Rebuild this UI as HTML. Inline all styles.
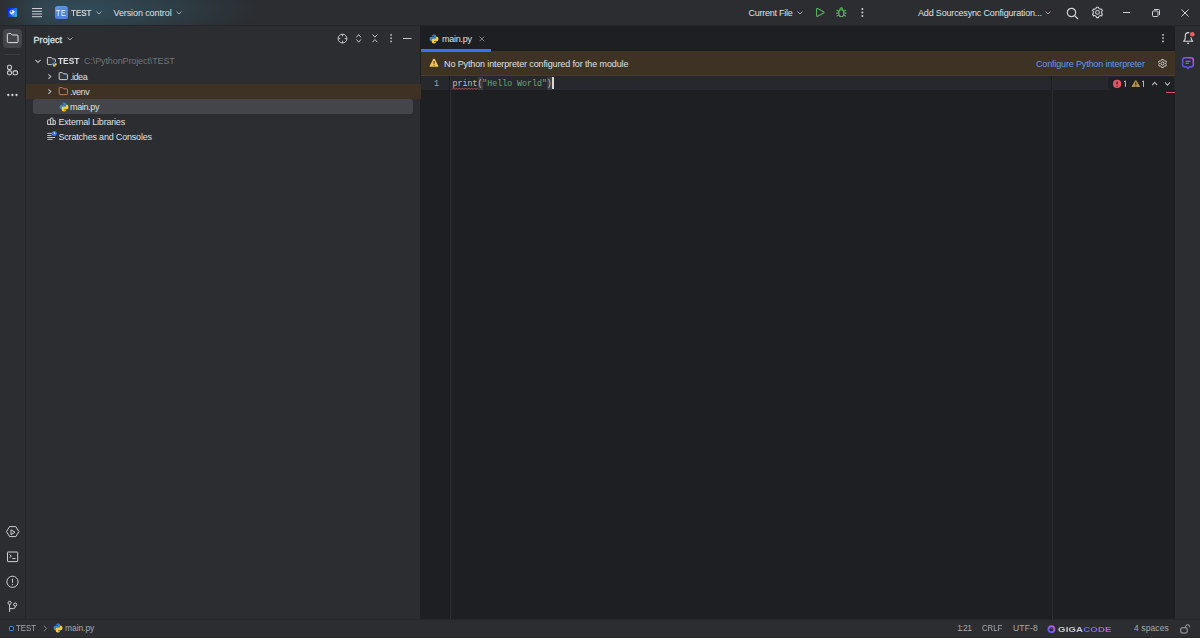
<!DOCTYPE html>
<html><head><meta charset="utf-8">
<style>
*{margin:0;padding:0;box-sizing:border-box}
html,body{width:1200px;height:638px;overflow:hidden;background:#2B2D30;font-family:"Liberation Sans",sans-serif;color:#DFE1E5}
.a{position:absolute}
.t{position:absolute;white-space:pre;font-size:9px;line-height:11px}
svg{position:absolute;overflow:visible}
#title{left:0;top:0;width:1200px;height:25px;background:#2B2D30}
#grad{left:0;top:0;width:1200px;height:25px;background:linear-gradient(90deg,rgba(43,45,48,0.9),rgba(43,45,48,0) 40px),radial-gradient(ellipse 185px 38px at 78px 9px,rgba(52,94,112,0.64) 0%,rgba(52,94,112,0.38) 45%,rgba(52,96,114,0.12) 80%,rgba(52,96,114,0) 100%)}
#lstrip{left:0;top:25px;width:25px;height:594px;background:#2B2D30}
#lborder{left:25px;top:25px;width:1px;height:594px;background:#242528}
#proj{left:26px;top:25px;width:394px;height:594px;background:#2B2D30}
#pborder{left:420px;top:25px;width:1px;height:594px;background:#1E1F22}
#editor{left:421px;top:25px;width:754px;height:594px;background:#1E1F22}
#rborder{display:none}
#rstrip{left:1175px;top:25px;width:25px;height:594px;background:#2B2D30}
#tborder{left:0;top:25px;width:1200px;height:1px;background:#242629}
#status{left:0;top:619px;width:1200px;height:19px;background:#2B2D30;border-top:1px solid #25272A;border-bottom:1px solid #292B2B}
</style></head><body>
<div id="title" class="a"></div>
<div id="grad" class="a"></div>
<div id="lstrip" class="a"></div>
<div id="lborder" class="a"></div>
<div id="proj" class="a"></div>
<div id="pborder" class="a"></div>
<div id="editor" class="a"></div>
<div id="rborder" class="a"></div>
<div id="rstrip" class="a"></div>
<div id="status" class="a"></div>
<div id="tborder" class="a"></div>

<!-- ===== TITLE BAR ===== -->
<svg style="left:0;top:0" width="25" height="25" viewBox="0 0 25 25"><defs><linearGradient id="ag" x1="0" y1="0.3" x2="1" y2="0.7"><stop offset="0" stop-color="#0a2ae8"/><stop offset="0.55" stop-color="#1f5cf5"/><stop offset="1" stop-color="#2bc4f8"/></linearGradient></defs><rect x="8" y="8" width="8.8" height="8.8" fill="url(#ag)"/><path d="M9.3 11.9Q9.8 14 12 14Q14.4 13.8 14.8 11.6Q14.2 10 12.2 9.9Q10.2 9.9 9.3 11.9Z" fill="#fff"/><circle cx="11.4" cy="11.6" r="1" fill="#1a44f0"/><path d="M11.2 14.3Q12.6 15.2 13.8 14.2" stroke="#cfe6ff" stroke-width="0.7" fill="none"/></svg>
<svg style="left:32px;top:7px" width="11" height="11" viewBox="0 0 11 11"><g stroke="#CED0D6" stroke-width="1"><path d="M0 1.5H10M0 4.3H10M0 7H10M0 9.7H10"/></g></svg>
<div class="a" style="left:55px;top:6px;width:12.5px;height:13px;border-radius:2.5px;background:linear-gradient(160deg,#5a9ae6,#4c84de 60%,#5b7ee8)"></div>
<div class="t" style="left:56.2px;top:7.8px;font-size:9px;color:#F4F7FF;letter-spacing:0.6px;transform:scaleX(0.8);transform-origin:0 0">TE</div>
<div class="t" style="left:71.2px;top:8px;transform:scaleX(0.89);transform-origin:0 0;-webkit-text-stroke:0.15px #DFE1E5">TEST</div>
<svg style="left:96px;top:11px" width="6" height="4" viewBox="0 0 6 4"><path d="M0.5 0.5L3 3L5.5 0.5" stroke="#B0B3B8" fill="none" stroke-width="0.9"/></svg>
<div class="t" style="left:113.5px;top:8px;letter-spacing:-0.1px">Version control</div>
<svg style="left:176px;top:11px" width="6" height="4" viewBox="0 0 6 4"><path d="M0.5 0.5L3 3L5.5 0.5" stroke="#B0B3B8" fill="none" stroke-width="0.9"/></svg>

<div class="t" style="left:748.5px;top:8px;letter-spacing:-0.25px">Current File</div>
<svg style="left:797px;top:11px" width="6" height="4" viewBox="0 0 6 4"><path d="M0.5 0.5L3 3L5.5 0.5" stroke="#B0B3B8" fill="none" stroke-width="0.9"/></svg>
<svg style="left:805px;top:0" width="50" height="25" viewBox="805 0 50 25"><g stroke="#5AAE5F" stroke-width="1.1" fill="none" stroke-linejoin="round" stroke-linecap="round">
<path d="M816.6 9.2Q816.6 8.1 817.6 8.6L823.6 11.8Q824.4 12.4 823.6 12.9L817.6 16.2Q816.6 16.7 816.6 15.6Z"/>
<path d="M839.9 9.6Q839.9 7.9 841.3 7.9Q842.7 7.9 842.7 9.6"/>
<rect x="838.9" y="9.7" width="4.8" height="6.8" rx="2.3"/>
<path d="M836.9 10.3L838.7 11.3M836.5 13.1H838.8M836.9 16L838.8 15M845.7 10.3L843.9 11.3M846.1 13.1H843.8M845.7 16L843.8 15"/>
</g></svg>
<svg style="left:855px;top:0" width="15" height="25" viewBox="855 0 15 25"><g fill="#CED0D6"><circle cx="862.4" cy="9" r="1"/><circle cx="862.4" cy="12.5" r="1"/><circle cx="862.4" cy="16" r="1"/></g></svg>

<div class="t" style="left:918px;top:8px;letter-spacing:-0.17px">Add Sourcesync Configuration...</div>
<svg style="left:1045px;top:11px" width="6" height="4" viewBox="0 0 6 4"><path d="M0.5 0.5L3 3L5.5 0.5" stroke="#B0B3B8" fill="none" stroke-width="0.9"/></svg>
<svg style="left:1066px;top:7px" width="13" height="13" viewBox="0 0 13 13"><g stroke="#CED0D6" stroke-width="1.2" fill="none"><circle cx="5.5" cy="5.5" r="4.2"/><path d="M8.6 8.6L12 12"/></g></svg>
<svg style="left:1085px;top:0" width="25" height="25" viewBox="1085 0 25 25"><g stroke="#CED0D6" stroke-width="1.05" fill="none" stroke-linejoin="round"><path d="M1096.49 7.20 L1098.51 7.20 L1098.80 8.41 L1100.31 9.28 L1101.50 8.92 L1102.51 10.67 L1101.61 11.53 L1101.61 13.27 L1102.51 14.13 L1101.50 15.88 L1100.31 15.52 L1098.80 16.39 L1098.51 17.60 L1096.49 17.60 L1096.20 16.39 L1094.69 15.52 L1093.50 15.88 L1092.49 14.13 L1093.39 13.27 L1093.39 11.53 L1092.49 10.67 L1093.50 8.92 L1094.69 9.28 L1096.20 8.41Z"/><circle cx="1097.5" cy="12.4" r="1.9"/></g></svg>
<div class="a" style="left:1123px;top:12px;width:7px;height:1px;background:#CED0D6"></div>
<svg style="left:1152px;top:9px" width="8" height="8" viewBox="0 0 8 8"><g stroke="#CED0D6" stroke-width="1" fill="none"><rect x="0.5" y="2" width="5.5" height="5.5" rx="0.8"/><path d="M2 0.5H6.5Q7.5 0.5 7.5 1.5V6"/></g></svg>
<svg style="left:1181px;top:9px" width="8" height="8" viewBox="0 0 8 8"><path d="M0.5 0.5L7.5 7.5M7.5 0.5L0.5 7.5" stroke="#CED0D6" stroke-width="1"/></svg>


<!-- ===== LEFT STRIP ===== -->
<div class="a" style="left:3px;top:29px;width:19px;height:19px;border-radius:4px;background:#43454A"></div>
<svg style="left:0;top:26px" width="25" height="25" viewBox="0 26 25 25"><path d="M7.3 34.6Q7.3 33.6 8.3 33.6H10.9L12.3 35H17Q18 35 18 36V41.6Q18 42.6 17 42.6H8.3Q7.3 42.6 7.3 41.6Z" stroke="#DFE1E5" stroke-width="1" fill="none" stroke-linejoin="round"/></svg>
<div class="a" style="left:5px;top:54px;width:15px;height:1px;background:#393B40"></div>
<svg style="left:0;top:60px" width="25" height="20" viewBox="0 60 25 20"><g stroke="#CED0D6" stroke-width="1.1" fill="none"><rect x="7.6" y="65.3" width="3.8" height="4.1" rx="1.2"/><rect x="7.6" y="70.9" width="3.8" height="3.9" rx="1.2"/><rect x="13.1" y="70.9" width="4.3" height="3.9" rx="1.2"/></g></svg>
<svg style="left:0;top:92px" width="25" height="6" viewBox="0 92 25 6"><g fill="#CED0D6"><circle cx="8.3" cy="95" r="1.15"/><circle cx="12.4" cy="95" r="1.15"/><circle cx="16.5" cy="95" r="1.15"/></g></svg>

<svg style="left:0;top:520px" width="25" height="99" viewBox="0 520 25 99"><g stroke="#CED0D6" stroke-width="1" fill="none" stroke-linejoin="round">
<path d="M6.5 531.6L9.6 526.6H15.8L18.9 531.6L15.8 536.6H9.6Z"/>
<path d="M11 529.8L15 532.2L11 534.6Z"/>
<rect x="7.5" y="552" width="10.2" height="9.6" rx="0.5"/>
<path d="M9.5 554.5L11.4 556.1L9.5 557.7M12.3 558.6H15.6"/>
<circle cx="12.5" cy="581.8" r="5.6"/>
<path d="M12.5 578.8V582.8"/>
<circle cx="9.6" cy="602.9" r="1.6"/>
<circle cx="15.2" cy="604.6" r="1.6"/>
<path d="M9.6 604.5V611.8M15.2 606.2V606.8Q15.2 608.6 13.4 608.6H9.6"/>
</g><circle cx="12.5" cy="584.6" r="0.7" fill="#CED0D6"/></svg>

<!-- ===== PROJECT PANEL ===== -->
<div class="t" style="left:33.5px;top:34.7px;letter-spacing:0.1px;-webkit-text-stroke:0.3px #DFE1E5">Project</div>
<svg style="left:67px;top:37px" width="6" height="4" viewBox="0 0 6 4"><path d="M0.5 0.5L3 3L5.5 0.5" stroke="#B0B3B8" fill="none" stroke-width="0.9"/></svg>
<svg style="left:330px;top:28px" width="90" height="20" viewBox="330 28 90 20"><g stroke="#C3C5CA" stroke-width="1" fill="none">
<circle cx="342.5" cy="38.6" r="4.4"/><path d="M342.5 34.2V36.4M342.5 40.8V43M338.1 38.6H340.3M344.7 38.6H346.9"/>
<path d="M356.4 37.4L358.7 34.6L361 37.4M356.4 39.4L358.7 42.2L361 39.4"/>
<path d="M372.5 34.5L374.9 37.2L377.3 34.5M372.5 42.2L374.9 39.5L377.3 42.2"/>
<path d="M403 38.5H411.6"/>
</g><g fill="#C3C5CA"><circle cx="391.1" cy="34.9" r="0.85"/><circle cx="391.1" cy="38.15" r="0.85"/><circle cx="391.1" cy="41.4" r="0.85"/></g></svg>

<!-- tree rows -->
<div class="a" style="left:26px;top:84px;width:394.6px;height:15px;background:#3D3223"></div>
<div class="a" style="left:33px;top:99px;width:380px;height:15px;border-radius:3px;background:#43454A"></div>

<svg style="left:30px;top:52px" width="30" height="17" viewBox="30 52 30 17"><path d="M35.4 59.8L38 62.4L40.6 59.8" stroke="#B7BAC0" fill="none" stroke-width="1.05"/><path d="M51.8 64.6H48.2Q47.4 64.6 47.4 63.8V58.3Q47.4 57.5 48.2 57.5H51.2L52.6 58.9H54.6Q55.4 58.9 55.4 59.7V61.8" stroke="#CED0D6" stroke-width="1" fill="#35373B" stroke-linejoin="round"/><g transform="translate(51.6,61.6) scale(0.54)"><path d="M2.7 2.3Q2.7 0.5 4.7 0.5H5.3Q7.3 0.5 7.3 2.3V4.3Q7.3 5.3 6.3 5.3H3.9Q2.9 5.3 2.9 6.3V7.3H2Q0.5 7.3 0.5 5.1V4.7Q0.5 2.7 2.4 2.7H5V2.3Z" fill="#3F7FC0"/><circle cx="3.9" cy="1.7" r="0.45" fill="#20364f"/><path d="M7.3 7.7Q7.3 9.5 5.3 9.5H4.7Q2.7 9.5 2.7 7.7V5.7Q2.7 4.7 3.7 4.7H6.1Q7.1 4.7 7.1 3.7V2.7H8Q9.5 2.7 9.5 4.9V5.3Q9.5 7.3 7.6 7.3H5V7.7Z" fill="#F5CC3A"/><circle cx="6.1" cy="8.3" r="0.45" fill="#5a4a10"/></g></svg>
<div class="t" style="left:58.3px;top:56px;font-weight:bold;transform:scaleX(0.925);transform-origin:0 0">TEST</div>
<div class="t" style="left:84px;top:56px;color:#6F737A;letter-spacing:-0.11px">C:\PythonProject\TEST</div>

<svg style="left:44px;top:68px" width="28" height="32" viewBox="44 68 28 32"><path d="M48.3 74.3L50.9 76.6L48.3 78.9" stroke="#B7BAC0" fill="none" stroke-width="1.05"/><path d="M59.2 73.3Q59.2 72.6 59.9 72.6H62.3L63.6 73.9H66.7Q67.4 73.9 67.4 74.6V78.9Q67.4 79.6 66.7 79.6H59.9Q59.2 79.6 59.2 78.9Z" stroke="#CED0D6" stroke-width="1" fill="#35373B" stroke-linejoin="round"/>
<path d="M48.3 89.3L50.9 91.6L48.3 93.9" stroke="#B7BAC0" fill="none" stroke-width="1.05"/><path d="M59.2 88.3Q59.2 87.6 59.9 87.6H62.3L63.6 88.9H66.7Q67.4 88.9 67.4 89.6V93.9Q67.4 94.6 66.7 94.6H59.9Q59.2 94.6 59.2 93.9Z" stroke="#C47F58" stroke-width="1" fill="#3B2A20" stroke-linejoin="round"/></svg>
<div class="t" style="left:70px;top:71.5px;letter-spacing:-0.47px">.idea</div>

<div class="t" style="left:70px;top:86.5px;letter-spacing:-0.47px">.venv</div>

<svg class="py" style="left:58.5px;top:101.5px" width="10" height="10" viewBox="0 0 10 10"><path d="M2.7 2.3Q2.7 0.5 4.7 0.5H5.3Q7.3 0.5 7.3 2.3V4.3Q7.3 5.3 6.3 5.3H3.9Q2.9 5.3 2.9 6.3V7.3H2Q0.5 7.3 0.5 5.1V4.7Q0.5 2.7 2.4 2.7H5V2.3Z" fill="#3F7FC0"/><circle cx="3.9" cy="1.7" r="0.45" fill="#20364f"/><path d="M7.3 7.7Q7.3 9.5 5.3 9.5H4.7Q2.7 9.5 2.7 7.7V5.7Q2.7 4.7 3.7 4.7H6.1Q7.1 4.7 7.1 3.7V2.7H8Q9.5 2.7 9.5 4.9V5.3Q9.5 7.3 7.6 7.3H5V7.7Z" fill="#F5CC3A"/><circle cx="6.1" cy="8.3" r="0.45" fill="#5a4a10"/></svg>
<div class="t" style="left:70px;top:101.7px;letter-spacing:-0.35px">main.py</div>

<svg style="left:40px;top:112px" width="20" height="32" viewBox="40 112 20 32"><g stroke="#CED0D6" stroke-width="1" fill="none" stroke-linejoin="round"><path d="M47.6 124.4V120.3Q47.6 119.9 48 119.9H50.6V118.5Q50.6 118.1 51 118.1H52.6Q53 118.1 53 118.5V120.6H54.9Q55.3 120.6 55.3 121V124.4Z"/><path d="M50.6 120V124.4M53 120.6V124.4"/></g><g stroke="#CED0D6" stroke-width="0.9"><path d="M47.3 133.4H52M47.3 135.5H51.5M47.3 137.5H55.2M47.3 139.4H52.6"/></g><circle cx="54.3" cy="133.4" r="2.5" fill="#3D7BF0"/><path d="M54.3 132.2V133.6H55.3" stroke="#E8EEFF" stroke-width="0.7" fill="none"/></svg>
<div class="t" style="left:58.5px;top:117px;letter-spacing:-0.2px">External Libraries</div>

<div class="t" style="left:58.5px;top:132px;letter-spacing:-0.19px">Scratches and Consoles</div>


<!-- ===== EDITOR ===== -->
<svg class="py" style="left:429px;top:33.5px" width="10" height="10" viewBox="0 0 10 10"><path d="M2.7 2.3Q2.7 0.5 4.7 0.5H5.3Q7.3 0.5 7.3 2.3V4.3Q7.3 5.3 6.3 5.3H3.9Q2.9 5.3 2.9 6.3V7.3H2Q0.5 7.3 0.5 5.1V4.7Q0.5 2.7 2.4 2.7H5V2.3Z" fill="#3F7FC0"/><circle cx="3.9" cy="1.7" r="0.45" fill="#20364f"/><path d="M7.3 7.7Q7.3 9.5 5.3 9.5H4.7Q2.7 9.5 2.7 7.7V5.7Q2.7 4.7 3.7 4.7H6.1Q7.1 4.7 7.1 3.7V2.7H8Q9.5 2.7 9.5 4.9V5.3Q9.5 7.3 7.6 7.3H5V7.7Z" fill="#F5CC3A"/><circle cx="6.1" cy="8.3" r="0.45" fill="#5a4a10"/></svg>
<div class="t" style="left:442px;top:33.5px;letter-spacing:-0.25px">main.py</div>
<svg style="left:478.5px;top:35.5px" width="6" height="6" viewBox="0 0 6 6"><path d="M0.6 0.6L5.2 5.2M5.2 0.6L0.6 5.2" stroke="#8C8F94" stroke-width="0.9"/></svg>

<svg style="left:1161px;top:33px" width="4" height="10" viewBox="0 0 4 10"><g fill="#CED0D6"><circle cx="2" cy="1.9" r="0.9"/><circle cx="2" cy="5.1" r="0.9"/><circle cx="2" cy="8.4" r="0.9"/></g></svg>

<!-- banner -->
<div class="a" style="left:421px;top:51px;width:754px;height:25px;background:#3D3223;border-top:1px solid #433727;border-bottom:1px solid #4A3D2B"></div><div class="a" style="left:421px;top:50px;width:754px;height:1px;background:#18191C"></div><div class="a" style="left:421px;top:76px;width:754px;height:1px;background:#23252B"></div>
<div class="a" style="left:421px;top:48.8px;width:70px;height:2.8px;background:#3574F0;border-radius:0 0 1px 1px"></div>
<svg style="left:429px;top:58px" width="10" height="10" viewBox="0 0 10 10"><path d="M5 0.6Q5.5 0.6 5.9 1.3L9.3 7.7Q9.8 8.8 8.6 8.8H1.4Q0.2 8.8 0.7 7.7L4.1 1.3Q4.5 0.6 5 0.6Z" fill="#F2C55C"/><path d="M5 3V5.8" stroke="#3D3223" stroke-width="1.1"/><circle cx="5" cy="7.2" r="0.6" fill="#3D3223"/></svg>
<div class="t" style="left:444px;top:59px;letter-spacing:-0.124px">No Python interpreter configured for the module</div>
<div class="t" style="left:1036px;top:59px;color:#6597EC;letter-spacing:-0.155px">Configure Python interpreter</div>
<svg style="left:1150px;top:52px" width="25" height="24" viewBox="1150 52 25 24"><g stroke="#CED0D6" stroke-width="1" fill="none" stroke-linejoin="round"><path d="M1161.72 59.48 L1163.28 59.48 L1163.52 60.36 L1164.71 61.05 L1165.59 60.81 L1166.38 62.17 L1165.73 62.81 L1165.73 64.19 L1166.38 64.83 L1165.59 66.19 L1164.71 65.95 L1163.52 66.64 L1163.28 67.52 L1161.72 67.52 L1161.48 66.64 L1160.29 65.95 L1159.41 66.19 L1158.62 64.83 L1159.27 64.19 L1159.27 62.81 L1158.62 62.17 L1159.41 60.81 L1160.29 61.05 L1161.48 60.36Z"/><circle cx="1162.5" cy="63.5" r="1.5"/></g></svg>

<!-- current line -->
<div class="a" style="left:421px;top:77px;width:754px;height:13px;background:#26282E"></div>
<div class="a" style="left:449px;top:76px;width:1px;height:543px;background:#1B1C1F"></div><div class="a" style="left:450px;top:76px;width:1.2px;height:543px;background:#2C2D31"></div>
<div class="a" style="left:1051px;top:76px;width:1px;height:543px;background:#1C1D20"></div><div class="a" style="left:1052px;top:76px;width:1.3px;height:543px;background:#2C2D31"></div>
<div class="t" style="left:434px;top:78px;font-family:'Liberation Mono',monospace;font-size:8.2px;line-height:12px;color:#A1A3AB">1</div>
<div class="a" style="left:477.5px;top:77px;width:5px;height:13px;background:#3B3D42"></div>
<div class="a" style="left:547px;top:77px;width:5px;height:13px;background:#3B3D42"></div>
<div class="t" style="left:452.6px;top:78px;font-family:'Liberation Mono',monospace;font-size:8.27px;line-height:12px;color:#BCBEC4">print(<span style="color:#6AAB73">"Hello World"</span>)</div>
<div class="a" style="left:552.2px;top:77px;width:1.4px;height:12px;background:#D5D7DB"></div>
<svg style="left:452px;top:87px" width="26" height="3" viewBox="0 0 26 3"><path d="M0 2.5L1.5 1L3 2.5L4.5 1L6 2.5L7.5 1L9 2.5L10.5 1L12 2.5L13.5 1L15 2.5L16.5 1L18 2.5L19.5 1L21 2.5L22.5 1L24 2.5L25.5 1" stroke="#C9595A" stroke-width="0.8" fill="none"/></svg>

<!-- error widget -->
<div class="a" style="left:1108px;top:77px;width:65.5px;height:12.5px;background:#1E1F22;border-radius:3px"></div>
<svg style="left:1100px;top:72px" width="80" height="24" viewBox="1100 72 80 24">
<circle cx="1117.1" cy="83.9" r="4.1" fill="#E55765"/><path d="M1117.1 81.4V84.6" stroke="#1E1F22" stroke-width="1.2"/><circle cx="1117.1" cy="86.2" r="0.65" fill="#1E1F22"/>
<path d="M1124.1 81.8L1125.4 80.9V86.9" stroke="#B4B7BC" stroke-width="1" fill="none"/>
<path d="M1135.8 80.2Q1136.3 80.2 1136.6 80.8L1139.9 86.2Q1140.3 87.1 1139.3 87.1H1132.3Q1131.3 87.1 1131.7 86.2L1135 80.8Q1135.3 80.2 1135.8 80.2Z" fill="#B39447"/><path d="M1135.8 82.2V84.8" stroke="#1E1F22" stroke-width="1.1"/><circle cx="1135.8" cy="86" r="0.55" fill="#1E1F22"/>
<path d="M1142.2 81.8L1143.5 80.9V86.9" stroke="#B4B7BC" stroke-width="1" fill="none"/>
<path d="M1152.2 85.2L1154.7 82.4L1157.2 85.2" stroke="#B4B7BD" fill="none" stroke-width="1.05"/>
<path d="M1165 82.4L1167.5 85.2L1170 82.4" stroke="#B4B7BD" fill="none" stroke-width="1.05"/>
</svg>
<div class="a" style="left:1166px;top:92px;width:9px;height:1.3px;background:#CF5060"></div>

<!-- right strip -->
<svg style="left:1175px;top:25px" width="25" height="25" viewBox="1175 25 25 25"><g stroke="#D5D7DC" stroke-width="1.1" fill="none" stroke-linejoin="round"><path d="M1183.7 41.2H1192.7Q1191 39.8 1191 37.6V36Q1191 32.6 1188.2 32.6Q1185.3 32.6 1185.3 36V37.6Q1185.3 39.8 1183.7 41.2Z"/><path d="M1187.2 43.4H1189"/></g><circle cx="1192.3" cy="34.3" r="3.3" fill="#2B2D30"/><circle cx="1192.3" cy="34.3" r="2.3" fill="#EB5F5F"/></svg>
<svg style="left:1175px;top:50px" width="25" height="25" viewBox="1175 50 25 25"><defs><linearGradient id="cg" x1="0" y1="1" x2="1" y2="0"><stop offset="0" stop-color="#4b4fe8"/><stop offset="0.55" stop-color="#6a52ea"/><stop offset="1" stop-color="#c955d0"/></linearGradient></defs><path d="M1185.2 57.8H1190.8Q1193.3 57.8 1193.3 60.3V64.4Q1193.3 66.9 1190.8 66.9H1189.4L1187.9 68.5L1186.4 66.9H1185.2Q1182.6 66.9 1182.6 64.4V60.3Q1182.6 57.8 1185.2 57.8Z" stroke="url(#cg)" stroke-width="1.6" fill="none" stroke-linejoin="round"/><path d="M1185.6 61.4H1190.6M1185.6 63.4H1188.8" stroke="#7468F0" stroke-width="1.25"/></svg>

<!-- ===== STATUS BAR ===== -->
<div class="a" style="left:8.8px;top:625.9px;width:5.3px;height:5.2px;border:1.2px solid #5088EE;border-radius:1.2px;background:#1D2230"></div>
<div class="t" style="left:16.3px;top:622.8px;font-size:8.5px;color:#A8ABB0;transform:scaleX(0.92);transform-origin:0 0">TEST</div>
<svg style="left:42.5px;top:625px" width="5" height="7" viewBox="0 0 5 7"><path d="M0.8 0.8L3.6 3.5L0.8 6.2" stroke="#8C8F94" fill="none" stroke-width="0.9"/></svg>
<svg class="py" style="left:52.5px;top:623px" width="10" height="10" viewBox="0 0 10 10"><path d="M2.7 2.3Q2.7 0.5 4.7 0.5H5.3Q7.3 0.5 7.3 2.3V4.3Q7.3 5.3 6.3 5.3H3.9Q2.9 5.3 2.9 6.3V7.3H2Q0.5 7.3 0.5 5.1V4.7Q0.5 2.7 2.4 2.7H5V2.3Z" fill="#3F7FC0"/><circle cx="3.9" cy="1.7" r="0.45" fill="#20364f"/><path d="M7.3 7.7Q7.3 9.5 5.3 9.5H4.7Q2.7 9.5 2.7 7.7V5.7Q2.7 4.7 3.7 4.7H6.1Q7.1 4.7 7.1 3.7V2.7H8Q9.5 2.7 9.5 4.9V5.3Q9.5 7.3 7.6 7.3H5V7.7Z" fill="#F5CC3A"/><circle cx="6.1" cy="8.3" r="0.45" fill="#5a4a10"/></svg>
<div class="t" style="left:65px;top:622.8px;font-size:8.5px;color:#A8ABB0;letter-spacing:-0.08px">main.py</div>

<div class="t" style="left:957.2px;top:622.8px;font-size:8.5px;color:#A8ABB0">1</div><div class="t" style="left:960.6px;top:622.8px;font-size:8.5px;color:#A8ABB0">:</div><div class="t" style="left:963.1px;top:622.8px;font-size:8.5px;color:#A8ABB0">2</div><div class="t" style="left:967.3px;top:622.8px;font-size:8.5px;color:#A8ABB0">1</div>
<div class="t" style="left:982.2px;top:622.8px;font-size:8.5px;color:#A8ABB0;transform:scaleX(0.915);transform-origin:0 0">CRLF</div>
<div class="t" style="left:1013px;top:622.8px;font-size:8.5px;color:#A8ABB0;letter-spacing:0.15px">UTF-8</div>
<svg style="left:1047px;top:625px" width="9" height="8" viewBox="0 0 9 8"><defs><linearGradient id="gg" x1="0" y1="1" x2="1" y2="0"><stop offset="0" stop-color="#4f5ff5"/><stop offset="1" stop-color="#c55ad8"/></linearGradient></defs><circle cx="4.3" cy="4.2" r="3" stroke="url(#gg)" stroke-width="1.9" fill="none"/><path d="M2.6 3.2Q3.6 2.6 4.6 3.6" stroke="#9a55e0" stroke-width="0.8" fill="none"/></svg>
<div class="t" style="left:1057.5px;top:623.5px;font-weight:bold;font-size:7.6px;letter-spacing:0.15px;color:#C9CBD0;transform:scaleX(1.26);transform-origin:0 0">GIGA<span style="background:linear-gradient(90deg,#5d6ff2,#8f66ea 50%,#d35fc2);-webkit-background-clip:text;background-clip:text;color:transparent">CODE</span></div>
<div class="t" style="left:1134px;top:622.8px;font-size:8.5px;color:#A8ABB0;letter-spacing:0.1px">4 spaces</div>
<svg style="left:1180px;top:624px" width="11" height="10" viewBox="0 0 11 10"><g stroke="#A8ABB0" stroke-width="1" fill="none"><rect x="0.8" y="3.8" width="6.4" height="5.2" rx="1"/><path d="M5.6 3.8V2.4Q5.6 0.8 7.6 0.8Q9.6 0.8 9.6 2.4V3.4"/></g></svg>

</body></html>
